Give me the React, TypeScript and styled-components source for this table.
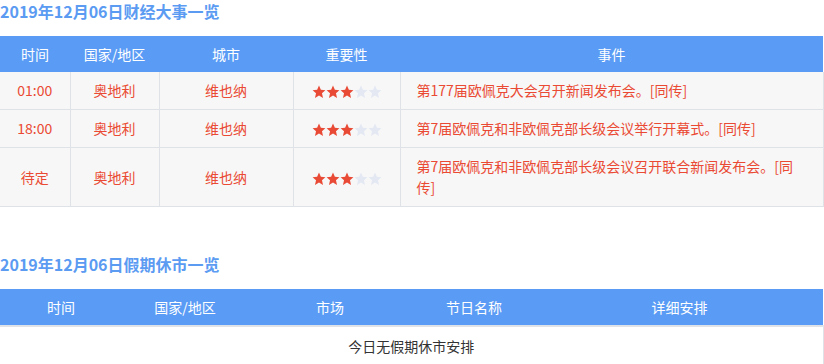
import React from "react";
import styled, { createGlobalStyle } from "styled-components";

const GlobalStyle = createGlobalStyle`
    body {
        margin: 0;
        background: #fff;
        font-family: "Noto Sans CJK SC", "Noto Sans", sans-serif;
    }
`;

const Page = styled.div`
    width: 824px;
`;

const Title = styled.h2<{ $top?: number }>`
    margin: ${p => p.$top ?? 0}px 0 14px;
    font-size: 16px;
    line-height: 22px;
    font-weight: 700;
    color: #5b9bf2;
`;

const Table = styled.table`
    width: 823px;
    border-collapse: collapse;
    table-layout: fixed;
    font-size: 14px;
`;

const Th = styled.th<{ $w: number }>`
    width: ${p => p.$w}px;
    height: 36px;
    padding: 0;
    background: #5a9cf5;
    color: #fff;
    font-weight: 400;
    text-align: center;
`;

const Td = styled.td<{ $left?: boolean }>`
    padding: 8px ${p => (p.$left ? "16px" : "4px")};
    line-height: 21px;
    background: #f7f7f7;
    border: 1px solid #dfe2e6;
    border-top: 0;
    color: #ea4a33;
    text-align: ${p => (p.$left ? "left" : "center")};
    vertical-align: middle;
    &:first-child {
        border-left: 0;
    }
`;

const EmptyCell = styled.td`
    height: 37px;
    padding: 0;
    text-align: center;
    color: #333;
    border-right: 1px solid #dfe2e6;
    border-top: 2px solid #dfe2e6;
`;

const Stars = styled.span`
    display: inline-flex;
    vertical-align: middle;
`;

function Star({ on }: { on: boolean }) {
    return (
        <svg width="14" height="14" viewBox="0 0 24 24">
            <polygon
                points="12,1 15.2,8.3 23,9 17.1,14.3 18.9,22.2 12,18.1 5.1,22.2 6.9,14.3 1,9 8.8,8.3"
                fill={on ? "#e84a35" : "#e3e8f3"}
            />
        </svg>
    );
}

const events = [
    { time: "01:00", text: "第177届欧佩克大会召开新闻发布会。[同传]" },
    { time: "18:00", text: "第7届欧佩克和非欧佩克部长级会议举行开幕式。[同传]" },
    { time: "待定", text: "第7届欧佩克和非欧佩克部长级会议召开联合新闻发布会。[同传]" },
];

function App() {
    return (
        <Page>
            <GlobalStyle />
            <Title>2019年12月06日财经大事一览</Title>
            <Table>
                <thead>
                    <tr>
                        <Th $w={70}>时间</Th>
                        <Th $w={89}>国家/地区</Th>
                        <Th $w={134}>城市</Th>
                        <Th $w={107}>重要性</Th>
                        <Th $w={423}>事件</Th>
                    </tr>
                </thead>
                <tbody>
                    {events.map(e => (
                        <tr key={e.text}>
                            <Td>{e.time}</Td>
                            <Td>奥地利</Td>
                            <Td>维也纳</Td>
                            <Td>
                                <Stars>
                                    {[0, 1, 2, 3, 4].map(i => (
                                        <Star key={i} on={i < 3} />
                                    ))}
                                </Stars>
                            </Td>
                            <Td $left>{e.text}</Td>
                        </tr>
                    ))}
                </tbody>
            </Table>

            <Title $top={46}>2019年12月06日假期休市一览</Title>
            <Table>
                <thead>
                    <tr>
                        <Th $w={122}>时间</Th>
                        <Th $w={126}>国家/地区</Th>
                        <Th $w={164}>市场</Th>
                        <Th $w={124}>节日名称</Th>
                        <Th $w={287}>详细安排</Th>
                    </tr>
                </thead>
                <tbody>
                    <tr>
                        <EmptyCell colSpan={5}>今日无假期休市安排</EmptyCell>
                    </tr>
                </tbody>
            </Table>
        </Page>
    );
}

export default App;
